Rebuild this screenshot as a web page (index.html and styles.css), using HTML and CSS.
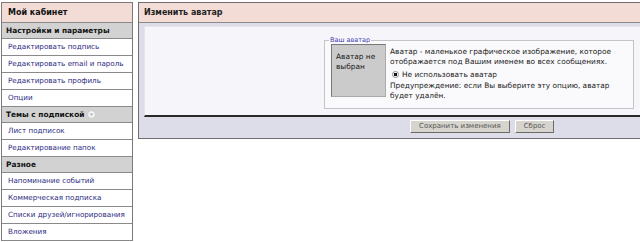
FILE: index.html
```html
<!DOCTYPE html>
<html lang="ru">
<head>
	<meta charset="UTF-8">
	<title>Изменить аватар</title>
	<link rel="stylesheet" href="styles.css">
</head>
<body>
	<div class="page">
		<nav class="sidebar">
			<div class="sidebar-head">Мой кабинет</div>
			<div class="sidebar-cat">Настройки и параметры</div>
			<a class="sidebar-link" href="#">Редактировать подпись</a>
			<a class="sidebar-link" href="#">Редактировать email и пароль</a>
			<a class="sidebar-link" href="#">Редактировать профиль</a>
			<a class="sidebar-link" href="#">Опции</a>
			<div class="sidebar-cat">Темы с подпиской
				<svg class="collapse" width="9" height="9" viewBox="0 0 9 9">
					<circle cx="4.5" cy="4.5" r="4" fill="#f4f4f4" stroke="#c8c8c8"/>
					<path d="M2.3 3.5 L6.7 3.5 L4.5 6 Z" fill="#b8b8c4"/>
				</svg>
			</div>
			<a class="sidebar-link" href="#">Лист подписок</a>
			<a class="sidebar-link" href="#">Редактирование папок</a>
			<div class="sidebar-cat">Разное</div>
			<a class="sidebar-link" href="#">Напоминание событий</a>
			<a class="sidebar-link" href="#">Коммерческая подписка</a>
			<a class="sidebar-link" href="#">Списки друзей/игнорирования</a>
			<a class="sidebar-link" href="#">Вложения</a>
		</nav>

		<main class="panel">
			<div class="panel-head">Изменить аватар</div>
			<div class="panel-body">
				<div class="panel-inner">
					<fieldset class="avatar-set">
						<legend>Ваш аватар</legend>
						<div class="avatar-row">
							<div class="avatar-box">Аватар не выбран</div>
							<div class="avatar-info">
								<p>Аватар - маленькое графическое изображение, которое отображается под Вашим именем во всех сообщениях.</p>
								<label class="avatar-radio">
									<span class="radio"></span>
									Не использовать аватар
								</label>
								<p>Предупреждение: если Вы выберите эту опцию, аватар будет удалён.</p>
							</div>
						</div>
					</fieldset>
				</div>
				<div class="actions">
					<button>Сохранить изменения</button>
					<button>Сброс</button>
				</div>
			</div>
		</main>
	</div>
</body>
</html>
```

FILE: styles.css
```css
* {
	box-sizing: border-box;
}

body {
	margin: 0;
	padding: 2px 0 0 1px;
	background-color: #fff;
	font-family: "DejaVu Sans", Verdana, sans-serif;
	font-size: 7.2px;
	color: #222;
	overflow: hidden;
}

.page {
	display: flex;
	align-items: flex-start;
	gap: 5px;
}

/* Sidebar */

.sidebar {
	display: flex;
	flex-direction: column;
	width: 132px;
	flex-shrink: 0;
	border: 1px solid #7a7a7a;
	border-bottom: none;
}

.sidebar-head {
	height: 20px;
	padding: 0 6px;
	line-height: 19px;
	background-color: #f3dcd6;
	border-bottom: 1px solid #8a8a8a;
	font-size: 8px;
	font-weight: bold;
	color: #111;
}

.sidebar-cat {
	display: flex;
	align-items: center;
	gap: 3px;
	height: 16px;
	padding: 0 4px;
	background-color: #d2d2d2;
	border-bottom: 1px solid #8a8a8a;
	font-size: 7.4px;
	font-weight: bold;
	color: #111;
}

.sidebar-link {
	display: block;
	height: 17px;
	padding: 0 6px;
	line-height: 16px;
	background-color: #fff;
	border-bottom: 1px solid #8a8a8a;
	color: #2b2b80;
	text-decoration: none;
	white-space: nowrap;
}

/* Panel */

.panel {
	flex: 1;
	border: 1px solid #6e6e6e;
	border-right: none;
}

.panel-head {
	height: 20px;
	padding: 0 5px;
	line-height: 19px;
	background-color: #f3dcd6;
	border-bottom: 1px solid #8a8a8a;
	font-size: 8px;
	font-weight: bold;
	color: #222;
}

.panel-body {
	padding: 3px 0 0 5px;
	background-color: #dcdde9;
}

.panel-inner {
	display: flex;
	justify-content: flex-end;
	height: 91px;
	padding: 9px 6px 0 0;
	background-color: #f5f5fa;
	border-top: 1px solid #e4e4ee;
	border-left: 1px solid #e4e4ee;
	border-bottom: 2px solid #2a2a2a;
}

.avatar-set {
	width: 310px;
	height: 73px;
	margin: 0;
	padding: 0 6px;
	background-color: #fafafc;
	border: 1px solid #c4c4c8;
}

.avatar-set legend {
	padding: 0 1px;
	margin-left: -2px;
	font-size: 6.5px;
	color: #3a3ab0;
}

.avatar-row {
	display: flex;
	gap: 4px;
}

.avatar-box {
	width: 55px;
	height: 53px;
	flex-shrink: 0;
	padding: 7px 4px;
	background-color: #cbcbcb;
	border: 1px solid #777;
	border-right-color: #aaa;
	border-bottom-color: #aaa;
	font-size: 7.4px;
	line-height: 9.5px;
}

.avatar-info {
	padding-top: 3px;
	font-size: 7.4px;
	line-height: 10px;
}

.avatar-info p {
	margin: 0;
}

.avatar-radio {
	display: flex;
	align-items: center;
	gap: 3px;
	height: 13px;
	padding-left: 2px;
	margin: 1px 0 0;
}

.radio {
	width: 7px;
	height: 7px;
	border: 1px solid #8a8a8a;
	border-radius: 50%;
	background: radial-gradient(circle, #111 0 1.6px, #fff 2px);
}

.actions {
	display: flex;
	gap: 5px;
	height: 21px;
	padding: 3px 0 0 266px;
}

.actions button {
	height: 13px;
	padding: 0 8px;
	background-color: #d6d4cc;
	border: 1px solid #fff;
	border-right-color: #6a6a6a;
	border-bottom-color: #6a6a6a;
	font-family: "DejaVu Sans", Verdana, sans-serif;
	font-size: 7px;
	color: #555;
	line-height: 11px;
}
```
